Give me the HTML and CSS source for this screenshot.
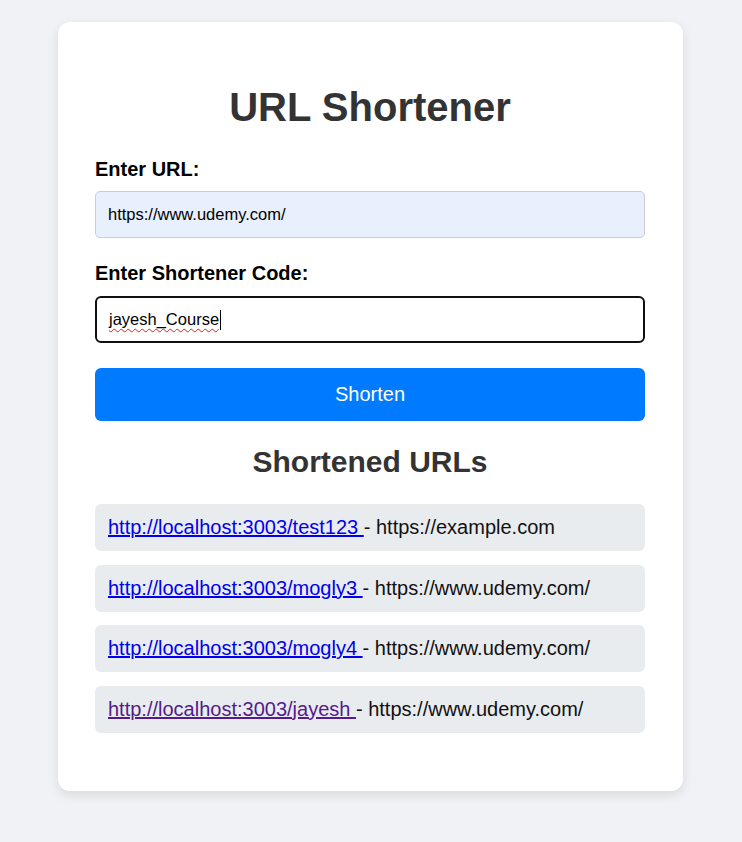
FILE: index.html
```html
<!DOCTYPE html>
<html lang="en">
<head>
<meta charset="utf-8">
<title>URL Shortener</title>
<link rel="stylesheet" href="styles.css">
</head>
<body>
<main class="card">
  <h1 class="title">URL Shortener</h1>
  <form class="form">
    <label class="label" for="url">Enter URL:</label>
    <input class="field field-autofill" id="url" type="text" value="https://www.udemy.com/">
    <label class="label label-second">Enter Shortener Code:</label>
    <div class="field field-focus" role="textbox"><span class="misspelled">jayesh_Course</span><span class="caret"></span></div>
    <button class="btn" type="button">Shorten</button>
  </form>
  <h2 class="subtitle">Shortened URLs</h2>
  <ul class="list">
    <li class="item"><a class="link" href="#a">http://localhost:3003/test123 </a>- https://example.com</li>
    <li class="item"><a class="link" href="#b">http://localhost:3003/mogly3 </a>- https://www.udemy.com/</li>
    <li class="item"><a class="link" href="#c">http://localhost:3003/mogly4 </a>- https://www.udemy.com/</li>
    <li class="item"><a class="link link-visited" href="#d">http://localhost:3003/jayesh </a>- https://www.udemy.com/</li>
  </ul>
</main>
</body>
</html>
```
FILE: styles.css
```css
html, body {
  margin: 0;
  padding: 0;
}
body {
  background: #f0f2f5;
  font-family: "Liberation Sans", Arial, sans-serif;
  padding: 22px 0 52px;
}
.card {
  box-sizing: border-box;
  width: 625px;
  margin: 0 0 0 58px;
  background: #fff;
  border-radius: 12px;
  box-shadow: 0 4px 12px rgba(0, 0, 0, 0.1);
  padding: 37px 38px 58px 37px;
}
.title {
  margin: 25px 0 0;
  text-align: center;
  font-size: 40px;
  line-height: 46px;
  font-weight: bold;
  color: #333;
}
.form {
  display: flex;
  flex-direction: column;
  margin-top: 28px;
}
.label {
  font-size: 20px;
  line-height: 23px;
  font-weight: bold;
  color: #000;
}
.label-second {
  margin-top: 24px;
}
.field {
  box-sizing: border-box;
  height: 47px;
  margin-top: 10px;
  padding: 0 12px;
  font-family: "Liberation Sans", Arial, sans-serif;
  font-size: 16.5px;
  color: #000;
  border-radius: 5px;
  display: flex;
  align-items: center;
  width: 100%;
}
.field-autofill {
  background: #e8f0fe;
  border: 1px solid #ccc;
  outline: none;
}
.field-focus {
  border: 2px solid #101010;
  border-radius: 6px;
  padding-left: 12px;
  margin-top: 11px;
  height: 47px;
}
.misspelled {
  text-decoration: underline wavy #e02020;
  text-decoration-thickness: 1px;
  text-underline-offset: 3px;
}
.caret {
  display: inline-block;
  width: 1px;
  height: 20px;
  background: #000;
  margin-left: 1px;
}
.btn {
  margin-top: 25px;
  height: 53px;
  border: none;
  border-radius: 6px;
  background: #007bff;
  color: #fff;
  font-family: "Liberation Sans", Arial, sans-serif;
  font-size: 20px;
  cursor: pointer;
}
.subtitle {
  margin: 24px 0 0;
  text-align: center;
  font-size: 30px;
  line-height: 34px;
  font-weight: bold;
  color: #333;
}
.list {
  list-style: none;
  margin: 25px 0 0;
  padding: 0;
  display: flex;
  flex-direction: column;
  gap: 13.5px;
}
.item {
  background: #e9ecef;
  border-radius: 6px;
  padding: 12px 13px;
  font-size: 20px;
  line-height: 23px;
  color: #111;
}
.link {
  color: #0000ee;
  text-decoration: underline;
}
.link-visited {
  color: #551a8b;
}
```
